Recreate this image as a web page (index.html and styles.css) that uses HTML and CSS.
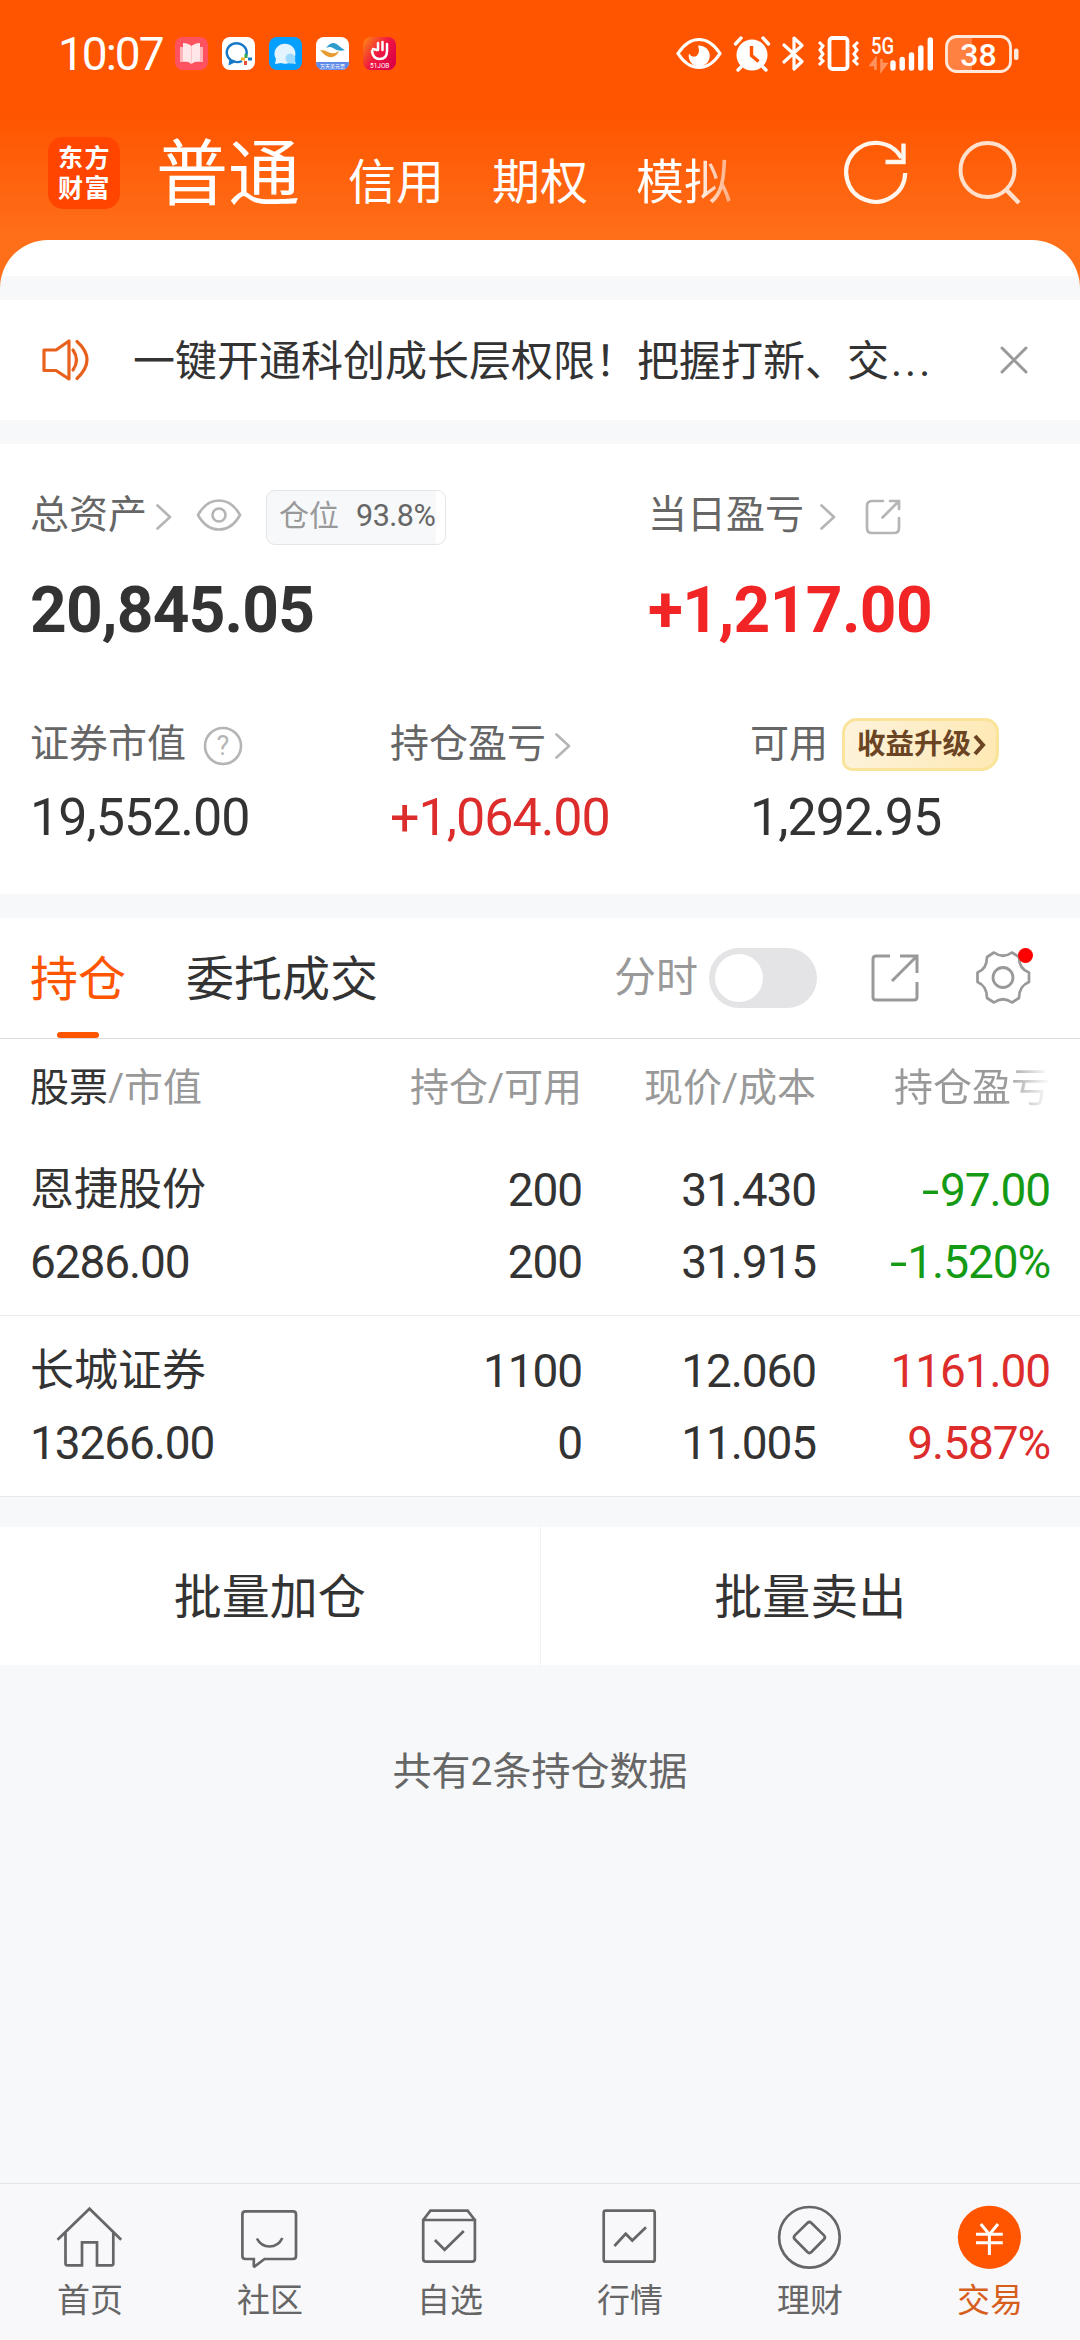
FILE: index.html
```html
<!DOCTYPE html>
<html lang="zh-CN">
  <head>
    <meta charset="UTF-8" />
    <meta name="viewport" content="width=device-width, initial-scale=1.0" />
    <title>交易</title>
    <link rel="stylesheet" href="styles.css" />
  </head>
  <body>
    <!-- 可复用的图标 -->
    <svg class="symbols">
      <symbol id="arrow" viewBox="0 0 16 26">
        <polyline points="1.5 1.5 14 13 1.5 24.5" fill="none" stroke="currentColor" stroke-width="2.6" stroke-linecap="round" stroke-linejoin="round"></polyline>
      </symbol>
    </svg>

    <div class="page">
      <header class="header">
        <div class="status">
          <span class="status-time">10:07</span>
          <div class="status-apps">
            <svg width="33" height="33" viewBox="0 0 33 33">
              <rect width="33" height="33" rx="8" fill="#ff5261" />
              <path d="M5 10h23v15H5z" fill="#ffb5ba" />
              <path d="M8 6q5 0 8.500 3q3.500-3 8.500-3v18q-5 0-8.500 3q-3.500-3-8.500-3z" fill="#ffe6e8" />
              <path d="M16.500 9v18" stroke="#ffc4c8" />
            </svg>
            <svg width="33" height="33" viewBox="0 0 33 33">
              <rect width="33" height="33" rx="8" fill="#fff" />
              <path d="M24 19A10 9.300 0 1 0 12 24.500L8 26.500L8.500 22.500M12 24.500Q16 26 20 24" fill="none" stroke="#1878c8" stroke-width="2.400" />
              <path d="M24 17v4" stroke="#35a853" stroke-width="3" />
              <path d="M26 22h4" stroke="#1878c8" stroke-width="3" />
              <path d="M23.500 24v4" stroke="#ea4b35" stroke-width="3" />
              <path d="M19 22h4" stroke="#f6b42a" stroke-width="3" />
            </svg>
            <svg width="33" height="33" viewBox="0 0 33 33">
              <rect width="33" height="33" rx="8" fill="#05a0ff" />
              <path d="M6 27l1-5a10.500 10 0 1 1 5 4z" fill="#e3f4ff" />
              <path d="M27 27l-1-3.500a5 5 0 1 0-4 3z" fill="#9ed9ff" />
            </svg>
            <svg width="33" height="33" viewBox="0 0 33 33">
              <rect width="33" height="33" rx="8" fill="#fff" />
              <path d="M10 11q6-8 12-3q3 3 7 5q-7 2-12-2q-3-2-7 0z" fill="#2e9ccc" />
              <path d="M4 13q5 0 8 2q6 3 11-1q-3 7-10 6q-4-1-9-7z" fill="#e79b2e" />
              <path d="M0 25h33q0 8-8 8H8q-8 0-8-8z" fill="#5f8be8" />
              <text x="4" y="31" font-size="5" fill="#fff">万天美元票</text>
            </svg>
            <svg width="33" height="33" viewBox="0 0 33 33">
              <defs>
                <linearGradient id="job" x1="0" y1="0" x2="1" y2="0.700">
                  <stop offset="0" stop-color="#ff8c12" />
                  <stop offset="0.550" stop-color="#ef1742" />
                  <stop offset="1" stop-color="#dc0048" />
                </linearGradient>
              </defs>
              <rect width="33" height="33" rx="8" fill="url(#job)" />
              <path d="M9 14q1 8 7.500 8q7.500 0 7.500-8V7M15 6v7M19.500 5v8M10 12l4 1" fill="none" stroke="#fff" stroke-width="2.500" stroke-linecap="round" />
              <text x="7" y="30.500" font-size="6.500" fill="#fff">51JOB</text>
            </svg>
          </div>
          <div class="status-icons">
            <svg width="46" height="33" viewBox="0 0 46 33">
              <path d="M2 16.500Q11 2.500 23 2.500T44 16.500Q35 30.500 23 30.500T2 16.500z" fill="none" stroke="#fff" stroke-width="3.200" />
              <path d="M22 8.500a10.500 10.500 0 1 1-9 8q3 5 7.500 2.500q4-3.500 1.500-10.500z" fill="#fff" />
            </svg>
            <svg class="icon-alarm" width="36" height="35" viewBox="0 0 36 35">
              <circle cx="18" cy="19" r="15.500" fill="#fff" />
              <path d="M1.500 8l5.500-6M34.500 8l-5.500-6M7 31l-3 3M29 31l3 3" stroke="#fff" stroke-width="3.400" stroke-linecap="round" />
              <path d="M17.500 10v9.500l7 6" fill="none" stroke="#ff5500" stroke-width="3.400" />
            </svg>
            <svg class="icon-bluetooth" width="23" height="35" viewBox="0 0 23 35">
              <path d="M2 9L20 25.500L12 33V2L20 9.500L2 26" fill="none" stroke="#fff" stroke-width="3.200" stroke-linejoin="round" stroke-linecap="round" />
            </svg>
            <svg class="icon-vibrate" width="43" height="35" viewBox="0 0 43 35">
              <rect x="12.500" y="2" width="18" height="31" rx="3" fill="none" stroke="#fff" stroke-width="3.800" />
              <path d="M2 6l4 4l-3 4l3 4l-3 4l3 3l-4 4M41 6l-4 4l3 4l-3 4l3 4l-3 3l4 4" fill="none" stroke="#fff" stroke-width="3" />
            </svg>
            <svg class="icon-signal" width="63" height="36" viewBox="0 0 63 36">
              <text class="signal-text" x="0" y="18" textLength="23" lengthAdjust="spacingAndGlyphs">5G</text>
              <path d="M4.500 34V23L0 29h4M10.500 23v11l4.500-6h-4" fill="none" stroke="#ff9460" stroke-width="2.500" />
              <path d="M22 27v5M31.200 23.500v8.500M40.500 19v13M49.800 12v20M59.300 4v28" stroke="#fff" stroke-width="5.400" stroke-linecap="round" />
            </svg>
            <svg class="icon-battery" width="74" height="38" viewBox="0 0 74 38">
              <path d="M27 1.500H12Q2 1.500 2 11v15q0 10 10 10h15z" fill="#ff8142" />
              <rect x="1.500" y="1.500" width="64" height="35" rx="10" fill="none" stroke="#ffe9dc" stroke-width="2.800" />
              <rect x="69" y="13.500" width="4.500" height="11.500" rx="2" fill="#ffe9dc" />
              <text class="battery-text" x="33.500" y="30.500" text-anchor="middle">38</text>
            </svg>
          </div>
        </div>

        <div class="account">
          <div class="logo"><span>东方</span><span>财富</span></div>
          <nav class="account-tabs">
            <span class="account-tab active">普通</span>
            <span class="account-tab">信用</span>
            <span class="account-tab">期权</span>
            <span class="account-tab fade">模拟</span>
          </nav>
          <svg width="64" height="64" viewBox="0 0 64 64">
            <path d="M56.500 17A29.500 29.500 0 1 0 60.200 32" fill="none" stroke="#fff6ee" stroke-width="4.200" />
            <path d="M58.500 2.500V21H40.500" fill="none" stroke="#fff6ee" stroke-width="4.400" />
          </svg>
          <svg class="icon-search" width="64" height="66" viewBox="0 0 64 66">
            <circle cx="29.500" cy="30" r="27" fill="none" stroke="#ffe0cc" stroke-width="4" />
            <path d="M48 49.500L61 63" stroke="#ffe0cc" stroke-width="4.400" />
          </svg>
        </div>
      </header>

      <main class="content">
        <div class="notice">
          <svg width="48" height="42" viewBox="0 0 48 42">
            <path d="M2 11h12L27 2v38L14 31.500H2z" fill="none" stroke="#e8611c" stroke-width="3.200" stroke-linejoin="round" />
            <path d="M31 11q7 10 0 20M35 2.500q20 18 0 37" fill="none" stroke="#e8611c" stroke-width="3.200" stroke-linecap="round" />
          </svg>
          <p class="notice-text">一键开通科创成长层权限！把握打新、交<span class="dots">...</span></p>
          <svg width="28" height="28" viewBox="0 0 28 28">
            <path d="M2 2l24 24M26 2L2 26" stroke="#999" stroke-width="3" stroke-linecap="round" />
          </svg>
        </div>

        <section class="assets">
          <div class="assets-main">
            <div>
              <div class="label">
                总资产
                <svg class="arrow"><use xlink:href="#arrow"></use></svg>
                <svg class="icon-eye" width="46" height="32" viewBox="0 0 46 32">
                  <path d="M2 16Q10 1.500 23 1.500T44 16Q36 30.500 23 30.500T2 16z" fill="none" stroke="#b5b5b5" stroke-width="2.600" />
                  <circle cx="23" cy="16" r="6.500" fill="none" stroke="#b5b5b5" stroke-width="2.600" />
                </svg>
                <span class="ratio"><span>仓位</span><b>93.8%</b></span>
              </div>
              <div class="value-lg">20,845.05</div>
            </div>
            <div>
              <div class="label">
                当日盈亏
                <svg class="arrow arrow-day"><use xlink:href="#arrow"></use></svg>
                <svg class="icon-share" width="36" height="36" viewBox="0 0 36 36">
                  <path d="M18 2H7Q2 2 2 7V29Q2 34 7 34H29Q34 34 34 29V19M25 2H34V10M33 3L17.500 18.500" fill="none" stroke="#b5b5b5" stroke-width="2.700" stroke-linecap="round" />
                </svg>
              </div>
              <div class="value-lg red-lg">+1,217.00</div>
            </div>
          </div>
          <div class="assets-sub">
            <div>
              <div class="label">
                证券市值
                <svg class="icon-help" width="40" height="40" viewBox="0 0 40 40">
                  <circle cx="20" cy="20" r="18" fill="none" stroke="#b5b5b5" stroke-width="2.600" />
                  <text x="20" y="29" text-anchor="middle">?</text>
                </svg>
              </div>
              <div class="value">19,552.00</div>
            </div>
            <div>
              <div class="label">
                持仓盈亏
                <svg class="arrow arrow-hold"><use xlink:href="#arrow"></use></svg>
              </div>
              <div class="value red">+1,064.00</div>
            </div>
            <div>
              <div class="label">
                可用
                <span class="upgrade">收益升级<svg width="13" height="22" viewBox="0 0 13 22"><path d="M2 2l8 9l-8 9" fill="none" stroke="#6b4423" stroke-width="4" /></svg></span>
              </div>
              <div class="value">1,292.95</div>
            </div>
          </div>
        </section>

        <section class="holdings">
          <div class="tabs">
            <span class="tab tab-active">持仓</span>
            <span class="tab">委托成交</span>
            <span class="minute">分时</span>
            <span class="switch"></span>
            <svg class="icon-export" width="48" height="48" viewBox="0 0 48 48">
              <path d="M19 2H5Q2 2 2 5V43Q2 46 5 46H43Q46 46 46 43V28M29 2H46V19M45 3L21 27" fill="none" stroke="#999" stroke-width="3" />
            </svg>
            <span class="setting">
              <svg width="54" height="54" viewBox="0 0 54 54">
                <path d="M18 1.500Q27 8 36 1.500L43 6Q43 18 53 21.500V31Q43 35 43 47L36 51.500Q27 45 18 51.500L11 47Q11 35 1.500 31V21.500Q11 18 11 6Z" fill="none" stroke="#999" stroke-width="2.700" stroke-linejoin="round" />
                <circle cx="27" cy="26.500" r="10" fill="none" stroke="#999" stroke-width="2.800" />
              </svg>
            </span>
          </div>

          <div class="row row-head">
            <span><em>股票</em>/市值</span>
            <span>持仓/可用</span>
            <span>现价/成本</span>
            <span class="head-fade">持仓盈亏</span>
          </div>
          <div class="row">
            <span class="name">恩捷股份</span>
            <span>200</span>
            <span>31.430</span>
            <span class="green"><i class="minus">-</i>97.00</span>
            <span>6286.00</span>
            <span>200</span>
            <span>31.915</span>
            <span class="green"><i class="minus">-</i>1.520%</span>
          </div>
          <div class="row">
            <span class="name">长城证券</span>
            <span>1100</span>
            <span>12.060</span>
            <span class="red">1161.00</span>
            <span>13266.00</span>
            <span>0</span>
            <span>11.005</span>
            <span class="red">9.587%</span>
          </div>
        </section>

        <div class="batch">
          <span class="batch-btn">批量加仓</span>
          <span class="batch-btn">批量卖出</span>
        </div>

        <p class="total">共有2条持仓数据</p>
      </main>

      <nav class="tabbar">
        <div class="tabbar-item">
          <svg width="68" height="68" viewBox="0 0 68 68">
            <path d="M1.500 35.700L33.500 4.700L65.200 35.700M9.500 29V59.500Q9.500 61.300 11.500 61.300H26V38.300H41V61.300H55.500Q57.300 61.300 57.300 59.500V29" />
          </svg>
          <span>首页</span>
        </div>
        <div class="tabbar-item">
          <svg width="68" height="68" viewBox="0 0 68 68">
            <path d="M9.400 7.300H57Q60 7.300 60 10.300V52Q60 55 57 55H28.500L18.500 62.500L17.800 62V55H9.400Q6.400 55 6.400 52V10.300Q6.400 7.300 9.400 7.300z" />
            <path d="M20.900 34.500Q25 42.500 33.600 42.500T46.400 34" />
          </svg>
          <span>社区</span>
        </div>
        <div class="tabbar-item">
          <svg width="68" height="68" viewBox="0 0 68 68">
            <path d="M7.200 16L14.400 6.700H51.600L58.900 16M7.200 16H58.900V54.700Q58.900 57.700 55.900 57.700H10.200Q7.200 57.700 7.200 54.700zM18.900 36L28.600 45.800L47.800 27" />
          </svg>
          <span>自选</span>
        </div>
        <div class="tabbar-item">
          <svg width="68" height="68" viewBox="0 0 68 68">
            <rect x="7.700" y="6.700" width="51" height="51" rx="2" />
            <path d="M18.400 42L29.700 29.800L36.300 36.500L50 23.300" />
          </svg>
          <span>行情</span>
        </div>
        <div class="tabbar-item">
          <svg width="68" height="68" viewBox="0 0 68 68">
            <circle cx="33.400" cy="33.300" r="30.300" />
            <path d="M31.400 19Q33.400 17 35.400 19L48 31.400Q49.800 33.300 48 35.200L35.400 48Q33.400 50 31.400 48L18.800 35.200Q17 33.300 18.800 31.400z" />
          </svg>
          <span>理财</span>
        </div>
        <div class="tabbar-item on">
          <svg width="68" height="68" viewBox="0 0 68 68">
            <circle class="coin" cx="33.400" cy="33.300" r="31.600" />
            <path class="yen" d="M24.800 20L33.400 30.500L42 20M20 30.200H46.800M20 38.700H46.800M33.400 30V51" />
          </svg>
          <span>交易</span>
        </div>
      </nav>
    </div>
  </body>
</html>
```
FILE: styles.css
```css
* {
  box-sizing: border-box;
}

body {
  margin: 0;
  background: #f7f8fa;
  color: #333;
  font-family: Roboto, "Noto Sans CJK SC", sans-serif;
}

p {
  margin: 0;
}

svg {
  display: block;
  flex: none;
  overflow: visible;
}

.symbols {
  position: absolute;
  width: 0;
  height: 0;
  overflow: hidden;
}

.page {
  display: flex;
  flex-direction: column;
  width: 1080px;
  height: 2340px;
  overflow: hidden;
}

/* 顶部 */
.header {
  height: 300px;
  margin-bottom: -60px;
  background: linear-gradient(#ff5500 115px, #ff6f1a 240px);
  color: #fff;
}

.status {
  display: flex;
  align-items: center;
  height: 107px;
  padding: 0 61px 0 58px;
}

.status-time {
  width: 117px;
  font-size: 46px;
  line-height: 60px;
  letter-spacing: -2px;
  white-space: nowrap;
}

.status-apps {
  display: flex;
  gap: 14px;
}

.status-icons {
  display: flex;
  align-items: center;
  margin-left: auto;
}

.icon-alarm {
  margin-left: 12px;
}

.icon-bluetooth {
  margin-left: 12px;
}

.icon-vibrate {
  margin-left: 12px;
}

.icon-signal {
  margin-left: 11px;
}

.signal-text {
  font-size: 23px;
  font-weight: 500;
  fill: #fff;
}

.icon-battery {
  margin-left: 11px;
}

.battery-text {
  font-size: 32px;
  font-weight: 500;
  fill: #fff;
}

.account {
  display: flex;
  align-items: center;
  height: 133px;
  padding: 0 58px 2px 48px;
}

.logo {
  display: flex;
  flex-direction: column;
  width: 72px;
  height: 72px;
  padding: 7px 0 0 10px;
  border-radius: 15px;
  background: #ff4500;
  font-size: 25px;
  font-weight: 700;
  line-height: 30px;
  letter-spacing: 1.5px;
}

.account-tabs {
  display: flex;
  align-items: baseline;
  gap: 48px;
  margin: 12px auto 0 36px;
}

.account-tab {
  font-size: 48px;
  line-height: 90px;
}

.account-tab.active {
  font-size: 72px;
}

.account-tab.fade {
  color: transparent;
  background: linear-gradient(90deg, #fff 60%, rgba(255, 255, 255, 0.45) 100%);
  -webkit-background-clip: text;
  background-clip: text;
}

.icon-search {
  margin-left: 49px;
}

/* 内容 */
.content {
  flex: 1;
  border-radius: 48px 48px 0 0;
  background: linear-gradient(#fff 36px, #f7f8fa 36px);
  padding-top: 60px;
}

.notice {
  display: flex;
  align-items: center;
  height: 120px;
  padding: 0 52px 0 42px;
  background: #fff;
}

.notice-text {
  flex: 1;
  margin-left: 43px;
  padding-top: 3px;
  font-size: 42px;
  line-height: 60px;
  white-space: nowrap;
}

.dots {
  margin-left: 2px;
  letter-spacing: 3px;
}

.assets {
  height: 450px;
  margin-top: 24px;
  padding-top: 44px;
  background: #fff;
}

.assets-main {
  display: grid;
  grid-template-columns: 618px 1fr;
  padding-left: 30px;
}

.assets-sub {
  display: grid;
  grid-template-columns: repeat(3, 360px);
  margin-top: 70px;
  padding-left: 30px;
}

.label {
  display: flex;
  align-items: center;
  height: 54px;
  font-size: 39px;
  line-height: 54px;
  color: #666;
  white-space: nowrap;
}

.arrow {
  width: 16px;
  height: 26px;
  margin: 4px 0 0 9px;
  color: #b5b5b5;
}

.arrow-day {
  margin-left: 16px;
}

.icon-eye {
  margin-left: 24px;
}

.icon-share {
  margin: 3px 0 0 29px;
}

.icon-help {
  margin: 4px 0 0 17px;
}

.icon-help text {
  font-size: 27px;
  fill: #b5b5b5;
}

.ratio {
  display: flex;
  align-items: center;
  height: 55px;
  margin: 4px 0 0 24px;
  padding: 0 10px 2px 12px;
  border: 1px solid #e5e5e5;
  border-radius: 9px;
  background: linear-gradient(90deg, #f7f8fa 169px, #fff 169px);
  font-size: 30px;
  color: #999;
}

.ratio b {
  margin-left: 17px;
  font-weight: 400;
  font-size: 30.500px;
  letter-spacing: -0.5px;
  color: #666;
}

.upgrade {
  display: flex;
  align-items: center;
  gap: 2px;
  height: 53px;
  margin-left: 14px;
  padding: 2px 10px 0 12px;
  border: 3px solid #f9e49a;
  border-radius: 15px 14px 18px 10px;
  background: linear-gradient(100deg, #fdf3dc, #fee9b4);
  font-size: 28.500px;
  font-weight: 700;
  color: #6b4423;
}

.value-lg {
  margin-top: 33px;
  font-size: 64px;
  font-weight: 700;
  line-height: 72px;
  letter-spacing: -0.8px;
}

.value {
  margin-top: 17px;
  font-size: 52px;
  line-height: 60px;
  letter-spacing: -1px;
}

.red-lg {
  letter-spacing: -0.6px;
  color: #f12525;
}

.red {
  color: #dd2c2c;
}

.green {
  color: #149a14;
}

/* 持仓 */
.holdings {
  margin-top: 24px;
  background: #fff;
}

.tabs {
  display: flex;
  align-items: center;
  height: 121px;
  padding: 0 50px 0 30px;
  border-bottom: 1px solid #ddd;
}

.tab {
  height: 120px;
  margin-right: 60px;
  font-size: 48px;
  line-height: 123px;
}

.tab-active {
  position: relative;
  color: #ff5500;
}

.tab-active::after {
  content: "";
  position: absolute;
  left: 27px;
  bottom: 0;
  width: 42px;
  height: 6px;
  border-radius: 3px;
  background: #ff5500;
}

.minute {
  margin-left: auto;
  font-size: 42px;
  line-height: 60px;
  color: #999;
}

.switch {
  width: 108px;
  height: 60px;
  margin-left: 11px;
  padding: 6px;
  border-radius: 30px;
  background: #e4e4e6;
}

.switch::before {
  content: "";
  display: block;
  width: 48px;
  height: 48px;
  border-radius: 50%;
  background: #fff;
}

.icon-export {
  margin-left: 54px;
}

.setting {
  position: relative;
  margin-left: 57px;
}

.setting::after {
  content: "";
  position: absolute;
  top: -3px;
  right: -3px;
  width: 15px;
  height: 15px;
  border-radius: 50%;
  background: #f00;
}

.row {
  display: grid;
  grid-template-columns: 318px 234px 234px 234px;
  padding: 19px 30px 17px 30px;
  border-bottom: 1px solid #e9e9eb;
  font-size: 46px;
  line-height: 72px;
  letter-spacing: -1.1px;
}

.row > span:not(:nth-child(4n + 1)) {
  text-align: right;
}

.row .name {
  font-size: 44px;
  letter-spacing: 0;
}

.minus {
  display: inline-block;
  margin-right: 4px;
  font-style: normal;
  transform: scaleX(1.35);
}

.row-head {
  height: 96px;
  padding-top: 13px;
  padding-bottom: 0;
  border: 0;
  font-size: 39px;
  letter-spacing: 0;
  color: #999;
}

.row-head em {
  font-style: normal;
  color: #333;
}

.row-head .head-fade {
  color: transparent;
  background: linear-gradient(90deg, #999 80%, #f5f5f5 98%);
  -webkit-background-clip: text;
  background-clip: text;
}

/* 批量操作 */
.batch {
  display: flex;
  height: 138px;
  margin-top: 30px;
  background: #fff;
}

.batch-btn {
  flex: 1;
  font-size: 48px;
  line-height: 141px;
  text-align: center;
}

.batch-btn:first-child {
  border-right: 1px solid #f0f0f2;
}

.total {
  margin-top: 79px;
  font-size: 39px;
  line-height: 56px;
  text-align: center;
  color: #666;
}

/* 底部导航 */
.tabbar {
  display: flex;
  height: 157px;
  border-top: 1px solid #e3e4e6;
  background: #f8f8fb;
}

.tabbar-item {
  flex: 1;
  display: flex;
  flex-direction: column;
  align-items: center;
  padding-top: 20px;
  font-size: 33px;
  line-height: 48px;
  color: #666;
}

.tabbar-item svg {
  margin-bottom: 5px;
  fill: none;
  stroke: #666;
  stroke-width: 2.7;
}

.tabbar-item.on {
  color: #d65f1e;
}

.tabbar-item .coin {
  fill: #ff5500;
  stroke: none;
}

.tabbar-item .yen {
  stroke: #fff;
  stroke-width: 3;
}
```
